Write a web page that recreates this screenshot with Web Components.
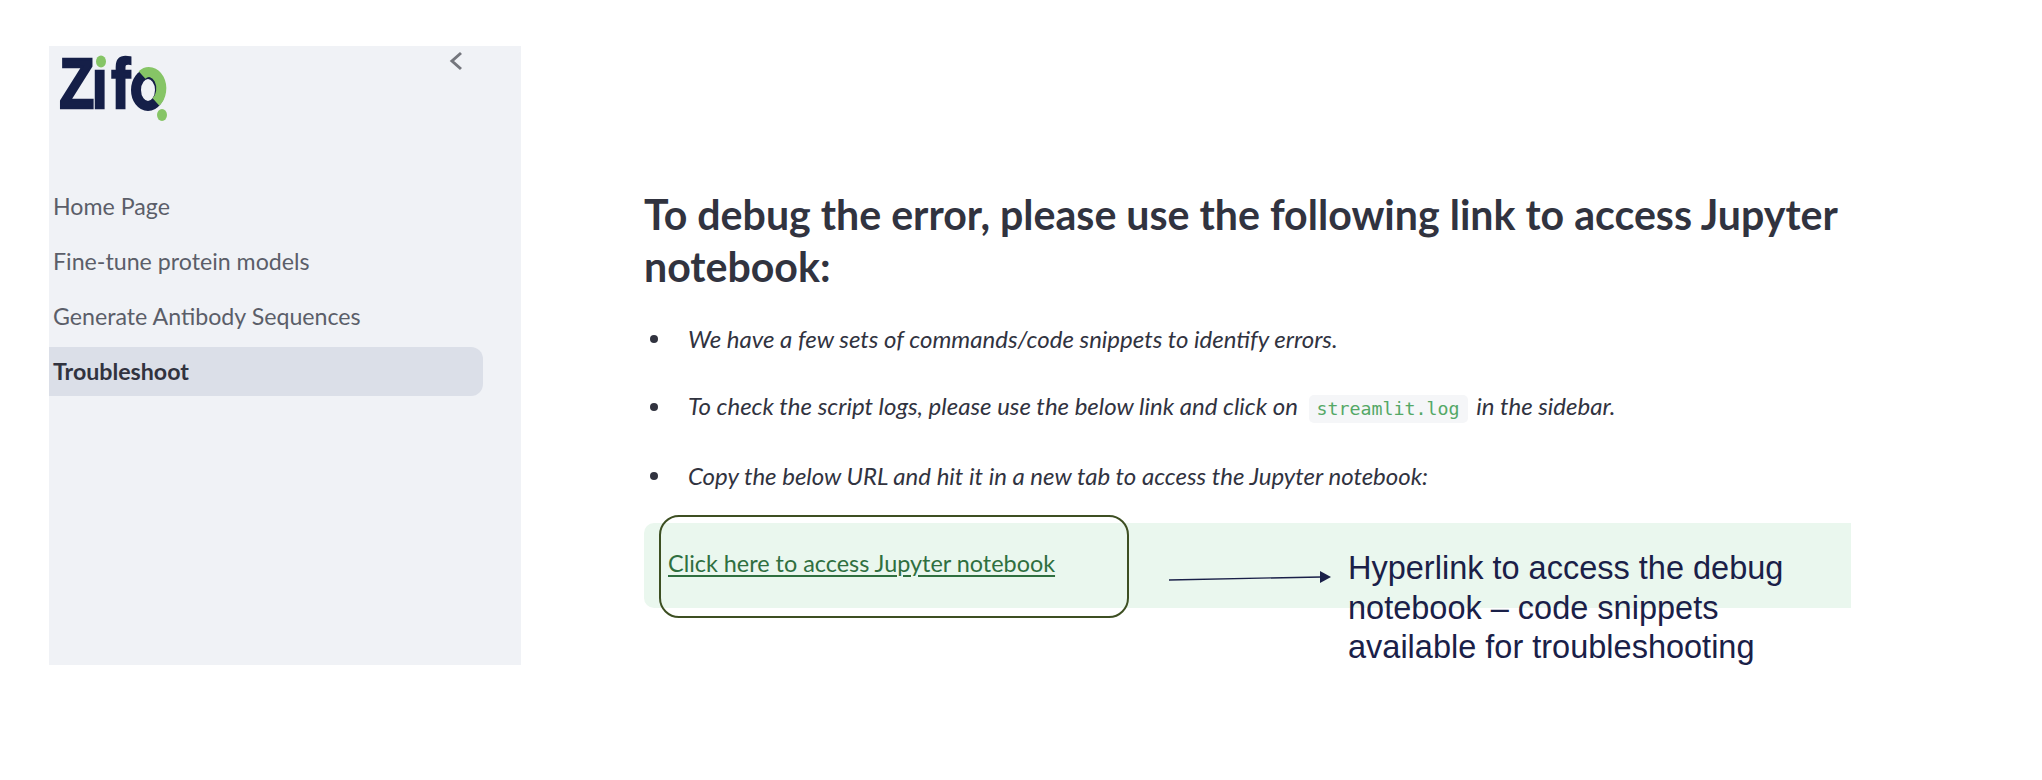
<!DOCTYPE html>
<html>
<head>
<meta charset="utf-8">
<title>Troubleshoot</title>
<style>
  html, body { margin: 0; padding: 0; background: #fff; }
  body { font-family: Lato, "Noto Sans", sans-serif; color: #31333f; }
</style>
</head>
<body>
<app-shell>
  <side-bar slot="side">
    <nav-item>Home Page</nav-item>
    <nav-item>Fine-tune protein models</nav-item>
    <nav-item>Generate Antibody Sequences</nav-item>
    <nav-item active>Troubleshoot</nav-item>
  </side-bar>
  <debug-panel></debug-panel>
</app-shell>

<script>
class AppShell extends HTMLElement {
  connectedCallback() {
    this.attachShadow({ mode: 'open' });
    this.shadowRoot.innerHTML = `
      <style>
        :host { display: flex; align-items: flex-start; width: 2042px; height: 780px; padding: 46px 0 0 49px; box-sizing: border-box; overflow: hidden; }
        .main { margin-left: 123px; width: 1207px; }
      </style>
      <slot name="side"></slot>
      <div class="main"><slot></slot></div>
    `;
  }
}

class SideBar extends HTMLElement {
  connectedCallback() {
    this.attachShadow({ mode: 'open' });
    this.shadowRoot.innerHTML = `
      <style>
        :host { display: block; position: relative; width: 472px; height: 619px; background: #f0f2f6; box-sizing: border-box; flex: none; }
        .logo { display: block; position: absolute; left: 0; top: 0; overflow: visible; }
        .logo text { font-family: "Liberation Sans", sans-serif; font-weight: 700; font-size: 70px; fill: #151f48; stroke: #151f48; stroke-width: 2.4px; }
        .collapse { position: absolute; left: 396px; top: 3px; }
        .items { display: flex; flex-direction: column; padding: 136px 38px 0 0; }
      </style>
      <svg class="logo" width="130" height="85" viewBox="0 0 130 85" role="img" aria-label="Zifo logo">
        <text transform="scale(0.82 1)" y="62"><tspan x="12.5">Z</tspan><tspan x="52">i</tspan><tspan x="76">f</tspan></text>
        <rect x="44" y="6" width="16" height="15" fill="#f0f2f6"/>
        <ellipse cx="52" cy="15.5" rx="5" ry="6" fill="#86c566"/>
        <ellipse cx="99" cy="44" rx="12" ry="16" fill="#f0f2f6" stroke="#151f48" stroke-width="10"/>
        <path d="M93 29 A12 16 0 0 1 107 56" fill="none" stroke="#86c566" stroke-width="10"/>
        <ellipse cx="113" cy="69" rx="5" ry="6" fill="#86c566"/>
      </svg>
      <svg class="collapse" width="22" height="26" viewBox="0 0 22 26" aria-hidden="true">
        <path d="M16 4 L7 12 L16 20" fill="none" stroke="#74767d" stroke-width="3"/>
      </svg>
      <div class="items"><slot></slot></div>
    `;
  }
}

class NavItem extends HTMLElement {
  connectedCallback() {
    this.attachShadow({ mode: 'open' });
    this.shadowRoot.innerHTML = `
      <style>
        :host { display: block; height: 49px; margin-bottom: 6px; padding-left: 4px; box-sizing: border-box; line-height: 49px; font-size: 23.2px; color: #5b5e69; border-radius: 0 12px 12px 0; }
        :host([active]) { background: #dbdfe8; font-weight: 700; color: #31333f; }
      </style>
      <slot></slot>
    `;
  }
}

class CodeChip extends HTMLElement {
  connectedCallback() {
    this.attachShadow({ mode: 'open' });
    this.shadowRoot.innerHTML = `
      <style>
        :host { display: inline-block; margin: 0 3px 0 5px; padding: 0 8px; background: #f5f6f8; border-radius: 5px; font: normal 18.3px/28px "DejaVu Sans Mono", monospace; color: #54a866; }
      </style>
      <slot></slot>
    `;
  }
}

class DebugPanel extends HTMLElement {
  connectedCallback() {
    this.attachShadow({ mode: 'open' });
    this.shadowRoot.innerHTML = `
      <style>
        :host { display: block; position: relative; padding-top: 142px; }
        h1 { margin: 0; font-size: 41.1px; line-height: 52px; font-weight: 700; color: #31333f; }
        ul { margin: 29px 0 0; padding: 0; list-style: none; display: flex; flex-direction: column; gap: 33.5px; }
        li { display: flex; align-items: center; height: 35px; font-size: 24px; font-style: italic; color: #31333f; }
        li::before { content: ""; width: 8px; height: 8px; margin: 0 30px 0 6px; border-radius: 50%; background: #31333f; flex: none; }
        .link-box { margin-top: 30px; height: 85px; display: flex; align-items: center; padding: 0 0 5px 24px; box-sizing: border-box; background: #eaf7ee; border-radius: 10px 0 0 10px; }
        a { color: #2f6f3f; font-size: 23.4px; text-decoration: underline; text-underline-offset: 3px; }
        .ring { position: absolute; left: 15px; top: 469px; width: 470px; height: 103px; box-sizing: border-box; border: 2px solid #3d4f22; border-radius: 20px; }
        .arrow { position: absolute; left: 525px; top: 522px; }
        .note { position: absolute; left: 704px; top: 503px; width: 470px; font: 32.5px/39.5px "Liberation Sans", sans-serif; color: #1a2048; }
      </style>
      <h1>To debug the error, please use the following link to access Jupyter notebook:</h1>
      <ul>
        <li><span>We have a few sets of commands/code snippets to identify errors.</span></li>
        <li><span>To check the script logs, please use the below link and click on <code-chip>streamlit.log</code-chip> in the sidebar.</span></li>
        <li><span>Copy the below URL and hit it in a new tab to access the Jupyter notebook:</span></li>
      </ul>
      <div class="link-box"><a href="#">Click here to access Jupyter notebook</a></div>
      <div class="ring"></div>
      <svg class="arrow" width="170" height="20" viewBox="0 0 170 20" aria-hidden="true">
        <path d="M0 12 L152 9" stroke="#1a2048" stroke-width="1.3" fill="none"/>
        <path d="M151 3 L162 9 L151 15 Z" fill="#1a2048"/>
      </svg>
      <div class="note">Hyperlink to access the debug notebook – code snippets available for troubleshooting</div>
    `;
  }
}

customElements.define('app-shell', AppShell);
customElements.define('side-bar', SideBar);
customElements.define('nav-item', NavItem);
customElements.define('code-chip', CodeChip);
customElements.define('debug-panel', DebugPanel);
</script>
</body>
</html>
